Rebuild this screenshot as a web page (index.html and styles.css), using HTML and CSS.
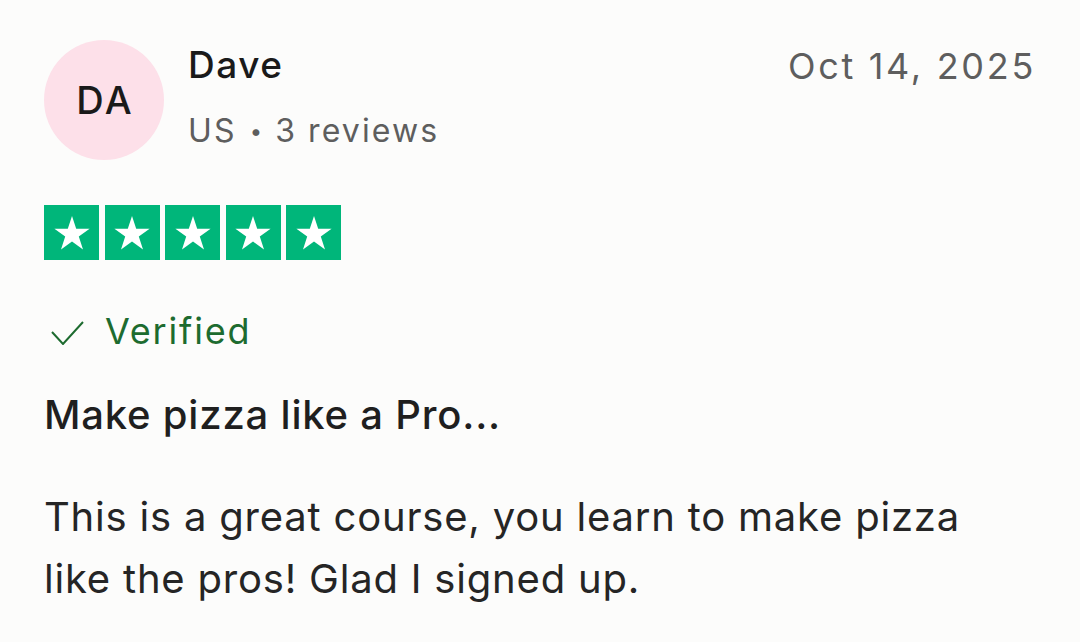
FILE: index.html
```html
<!DOCTYPE html>
<html>
<head>
<meta charset="utf-8">
<link rel="stylesheet" href="styles.css">
</head>
<body>
<article class="review">
  <header class="head">
    <div class="user">
      <div class="avatar">DA</div>
      <div class="info">
        <div class="name">Dave</div>
        <div class="meta">US <span class="dot">•</span> 3 reviews</div>
      </div>
    </div>
    <time class="date">Oct 14, 2025</time>
  </header>
  <div class="stars">
    <span class="star"><svg viewBox="0 0 24 24"><path d="M12 3.5l2.1 6.4h6.7l-5.4 3.9 2.1 6.4L12 16.3l-5.5 3.9 2.1-6.4-5.4-3.9h6.7z" fill="#fff"/></svg></span>
    <span class="star"><svg viewBox="0 0 24 24"><path d="M12 3.5l2.1 6.4h6.7l-5.4 3.9 2.1 6.4L12 16.3l-5.5 3.9 2.1-6.4-5.4-3.9h6.7z" fill="#fff"/></svg></span>
    <span class="star"><svg viewBox="0 0 24 24"><path d="M12 3.5l2.1 6.4h6.7l-5.4 3.9 2.1 6.4L12 16.3l-5.5 3.9 2.1-6.4-5.4-3.9h6.7z" fill="#fff"/></svg></span>
    <span class="star"><svg viewBox="0 0 24 24"><path d="M12 3.5l2.1 6.4h6.7l-5.4 3.9 2.1 6.4L12 16.3l-5.5 3.9 2.1-6.4-5.4-3.9h6.7z" fill="#fff"/></svg></span>
    <span class="star"><svg viewBox="0 0 24 24"><path d="M12 3.5l2.1 6.4h6.7l-5.4 3.9 2.1 6.4L12 16.3l-5.5 3.9 2.1-6.4-5.4-3.9h6.7z" fill="#fff"/></svg></span>
  </div>
  <div class="verified">
    <svg class="check" viewBox="0 0 34 24"><path d="M1 11l11 12L32 1" fill="none" stroke="#1d6b2f" stroke-width="2"/></svg>
    <span>Verified</span>
  </div>
  <h2 class="title">Make pizza like a Pro...</h2>
  <p class="body">This is a great course, you learn to make pizza like the pros! Glad I signed up.</p>
</article>
</body>
</html>
```
FILE: styles.css
```css
html, body {
  margin: 0;
  padding: 0;
  background: #fcfcfb;
}
body {
  font-family: Inter, "Liberation Sans", sans-serif;
  color: #1f1f1f;
}
.review {
  padding: 40px 44px 0 44px;
}
.head {
  display: flex;
  justify-content: space-between;
  align-items: flex-start;
}
.user {
  display: flex;
  align-items: flex-start;
  gap: 24px;
}
.avatar {
  width: 120px;
  height: 120px;
  border-radius: 50%;
  background: #fde0e9;
  display: flex;
  align-items: center;
  justify-content: center;
  font-size: 38px;
  font-weight: 500;
  color: #1a1a1a;
  letter-spacing: 2.5px;
  text-indent: 2.5px;
}
.info {
  padding-top: 3px;
}
.name {
  font-size: 37px;
  font-weight: 500;
  line-height: 44px;
  letter-spacing: 1.5px;
  color: #1a1a1a;
}
.meta {
  margin-top: 24px;
  font-size: 32px;
  line-height: 40px;
  letter-spacing: 2.1px;
  color: #5e5e5e;
}
.dot {
  font-size: 22px;
  vertical-align: 3px;
  letter-spacing: 0;
  margin: 0 2px;
}
.date {
  font-size: 36px;
  line-height: 44px;
  color: #5e5e5e;
  padding-top: 4px;
  letter-spacing: 2.7px;
}
.stars {
  display: flex;
  gap: 5.5px;
  margin-top: 45px;
}
.star {
  width: 55px;
  height: 55px;
  background: #00b67a;
  display: flex;
  align-items: center;
  justify-content: center;
}
.star svg {
  width: 48px;
  height: 48px;
}
.verified {
  display: flex;
  align-items: center;
  gap: 20px;
  margin-top: 49px;
  padding-left: 7px;
  color: #1d6b2f;
  font-size: 36px;
  line-height: 44px;
  letter-spacing: 1.8px;
}
.check {
  width: 34px;
  height: 24px;
  margin-top: 4px;
}
.title {
  margin: 37px 0 0;
  font-size: 40px;
  font-weight: 500;
  line-height: 50px;
  letter-spacing: 0.8px;
  color: #1f1f1f;
}
.body {
  margin: 46px 0 0;
  font-size: 40px;
  line-height: 62px;
  letter-spacing: 0.8px;
  color: #252525;
}
```
